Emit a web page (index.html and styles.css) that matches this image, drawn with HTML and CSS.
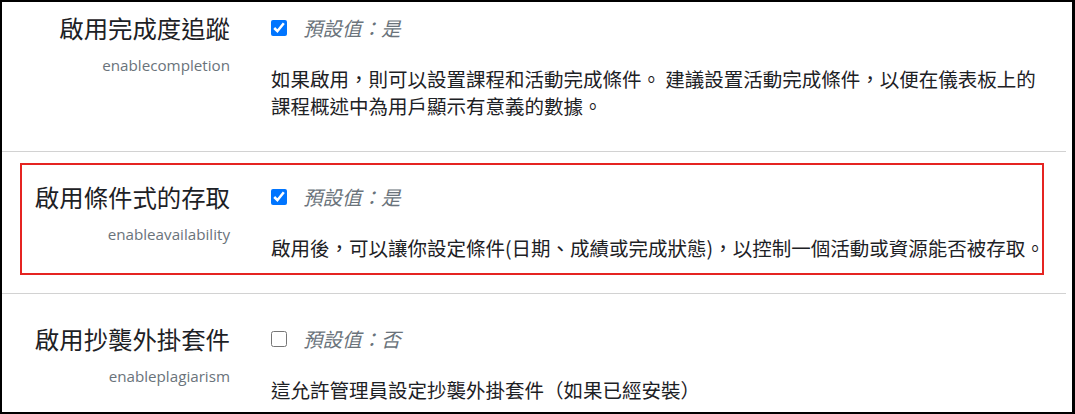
FILE: index.html
```html
<!DOCTYPE html>
<html lang="zh-Hant">
<head>
<meta charset="utf-8">
<title>設定</title>
<link rel="stylesheet" href="styles.css">
</head>
<body>
<div class="frame">
  <div class="list">
    <div class="row">
      <div class="setting">
        <div class="label">
          <div class="title">啟用完成度追蹤</div>
          <div class="name">enablecompletion</div>
        </div>
        <div class="control">
          <div class="default-line"><input type="checkbox" checked><span class="default">預設值：是</span></div>
          <div class="desc">如果啟用，則可以設置課程和活動完成條件。 建議設置活動完成條件，以便在儀表板上的課程概述中為用戶顯示有意義的數據。</div>
        </div>
      </div>
    </div>
    <div class="row">
      <div class="setting highlight">
        <div class="label">
          <div class="title">啟用條件式的存取</div>
          <div class="name">enableavailability</div>
        </div>
        <div class="control">
          <div class="default-line"><input type="checkbox" checked><span class="default">預設值：是</span></div>
          <div class="desc">啟用後，可以讓你設定條件(日期、成績或完成狀態)，以控制一個活動或資源能否被存取。</div>
        </div>
      </div>
    </div>
    <div class="row">
      <div class="setting">
        <div class="label">
          <div class="title">啟用抄襲外掛套件</div>
          <div class="name">enableplagiarism</div>
        </div>
        <div class="control">
          <div class="default-line"><input type="checkbox"><span class="default">預設值：否</span></div>
          <div class="desc">這允許管理員設定抄襲外掛套件（如果已經安裝）</div>
        </div>
      </div>
    </div>
  </div>
</div>
</body>
</html>
```
FILE: styles.css
```css
html, body {
  margin: 0;
  padding: 0;
  background: #fff;
}

.frame {
  width: 1075px;
  height: 414px;
  box-sizing: border-box;
  border-style: solid;
  border-color: #000;
  border-width: 2px 3px 2px 2px;
  padding-right: 6px;
  overflow: hidden;
  background: #fff;
  font-family: "Noto Sans CJK SC", "Noto Sans CJK TC", sans-serif;
  color: #1d2125;
}

.list {
  margin-top: -19px;
}

.row {
  padding: 11px 22px 18px 18px;
  border-bottom: 1px solid #d2d2d2;
}

.setting {
  border: 2px solid transparent;
  padding: 15px 0 12px 0;
  display: grid;
  grid-template-columns: 208px 1fr;
  column-gap: 41px;
}

.setting.highlight {
  border-color: #e52421;
}

.label {
  text-align: right;
}

.title {
  font-size: 24.4px;
  line-height: 34px;
  white-space: nowrap;
  color: #1d2125;
}

.name {
  margin-top: 10px;
  font-family: "Open Sans", "Noto Sans", sans-serif;
  font-size: 15.2px;
  line-height: 20px;
  color: #6a737b;
}

.default-line {
  display: flex;
  align-items: center;
  height: 34px;
}

.default-line input {
  margin: 0 16px 0 0;
  width: 16px;
  height: 16px;
  accent-color: #0075ff;
}

.default {
  font-size: 19.5px;
  font-style: italic;
  color: #6a737b;
  line-height: 34px;
}

.desc {
  margin-top: 20px;
  margin-right: -8px;
  font-size: 19.5px;
  line-height: 27px;
  color: #1d2125;
}
```
